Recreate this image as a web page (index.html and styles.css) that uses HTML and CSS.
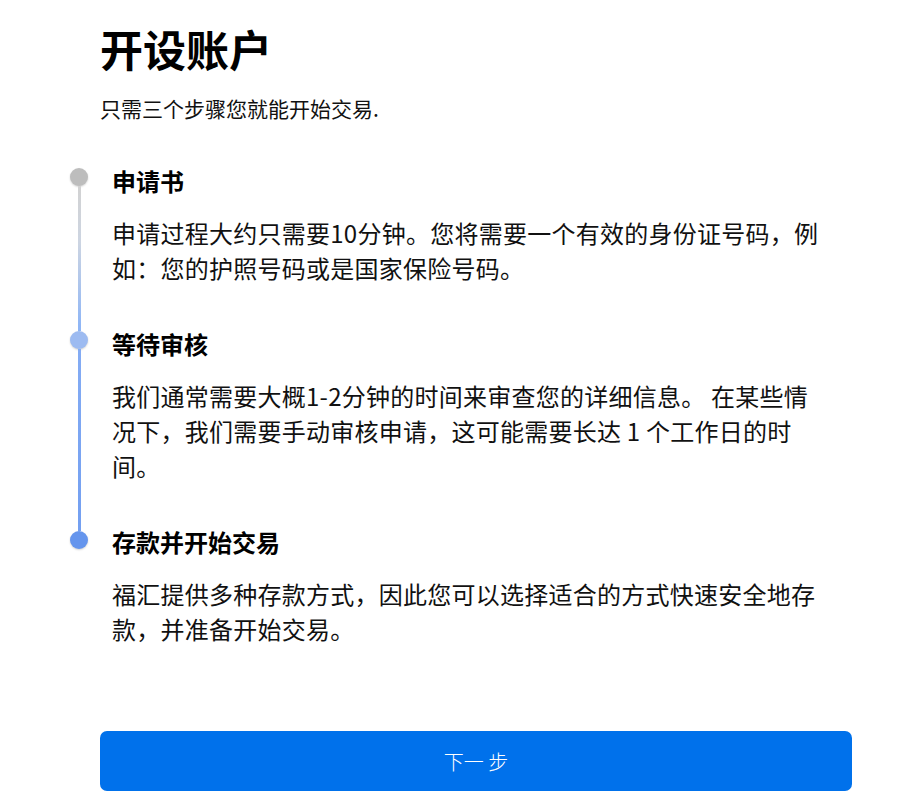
FILE: index.html
```html
<!DOCTYPE html>
<html lang="zh-CN">
<head>
  <meta charset="UTF-8" />
  <meta name="viewport" content="width=device-width, initial-scale=1.0"/>
  <title>开设账户</title>
  <link rel="stylesheet" href="styles.css">
</head>
<body>
  <div class="page">
    <h1 class="title">开设账户</h1>
    <p class="subtitle">只需三个步骤您就能开始交易.</p>

    <ol class="steps">
      <li class="step step-1">
        <div class="rail">
          <span class="seg seg-top"></span>
          <span class="dot"></span>
          <span class="seg seg-bottom"></span>
        </div>
        <div class="step-body">
          <h3>申请书</h3>
          <p>申请过程大约只需要10分钟。您将需要一个有效的身份证号码，例如：您的护照号码或是国家保险号码。</p>
        </div>
      </li>
      <li class="step step-2">
        <div class="rail">
          <span class="seg seg-top"></span>
          <span class="dot"></span>
          <span class="seg seg-bottom"></span>
        </div>
        <div class="step-body">
          <h3>等待审核</h3>
          <p>我们通常需要大概1-2分钟的时间来审查您的详细信息。 在某些情况下，我们需要手动审核申请，这可能需要长达 1 个工作日的时间。</p>
        </div>
      </li>
      <li class="step step-3">
        <div class="rail">
          <span class="seg seg-top"></span>
          <span class="dot"></span>
          <span class="seg seg-bottom"></span>
        </div>
        <div class="step-body">
          <h3>存款并开始交易</h3>
          <p>福汇提供多种存款方式，因此您可以选择适合的方式快速安全地存款，并准备开始交易。</p>
        </div>
      </li>
    </ol>

    <button class="next-btn" type="button">下一&nbsp;步</button>
  </div>
</body>
</html>
```

FILE: styles.css
```css
* {
  margin: 0;
  padding: 0;
  box-sizing: border-box;
}
body {
  font-family: "Noto Sans CJK SC", "Noto Sans", sans-serif;
  background-color: #ffffff;
  color: #111;
}
.page {
  width: 852px;
  padding-left: 100px;
  padding-top: 23px;
}

.title {
  font-size: 43px;
  line-height: 50px;
  font-weight: bold;
  color: #000;
}
.subtitle {
  margin-top: 20px;
  font-size: 21px;
  line-height: 30px;
}

/* lista de passos com trilho à esquerda */
.steps {
  list-style: none;
  margin-top: 40px;
  margin-left: -31px;
}
.step {
  display: grid;
  grid-template-columns: 20px 1fr;
  column-gap: 23px;
}
.rail {
  display: flex;
  flex-direction: column;
  align-items: center;
}
.seg {
  width: 3px;
}
.seg-top {
  height: 5px;
}
.step-3 .seg-top {
  height: 7px;
}
.seg-bottom {
  flex: 1;
}
.dot {
  width: 18px;
  height: 18px;
  border-radius: 50%;
  flex-shrink: 0;
  box-shadow: 0 1px 2px rgba(0, 0, 0, 0.18);
}
.step-1 .dot {
  background-color: #bdbdbd;
}
.step-1 .seg-bottom {
  background: linear-gradient(#d2d2d2, #cdd5e2 40%, #8fb6f6);
}
.step-2 .seg-top {
  background-color: #8fb6f6;
}
.step-2 .dot {
  background-color: #9dbbf1;
}
.step-2 .seg-bottom {
  background: linear-gradient(#84acf4, #74a0f1);
}
.step-3 .seg-top {
  background-color: #74a0f1;
}
.step-3 .dot {
  background-color: #6595ed;
}

.step-body {
  width: 712px;
  padding-bottom: 41px;
}
.step-3 .step-body {
  padding-bottom: 0;
}
.step-body h3 {
  font-size: 24px;
  line-height: 35px;
  font-weight: bold;
  color: #000;
}
.step-body p {
  margin-top: 17px;
  font-size: 24px;
  line-height: 35px;
  letter-spacing: 0.25px;
}

.next-btn {
  display: block;
  width: 752px;
  height: 60px;
  margin-top: 85px;
  border: none;
  border-radius: 7px;
  background-color: #0071eb;
  color: #ffffff;
  font-family: "Noto Sans CJK SC", "Noto Sans", sans-serif;
  font-size: 20px;
  font-weight: 300;
  cursor: pointer;
}
```
